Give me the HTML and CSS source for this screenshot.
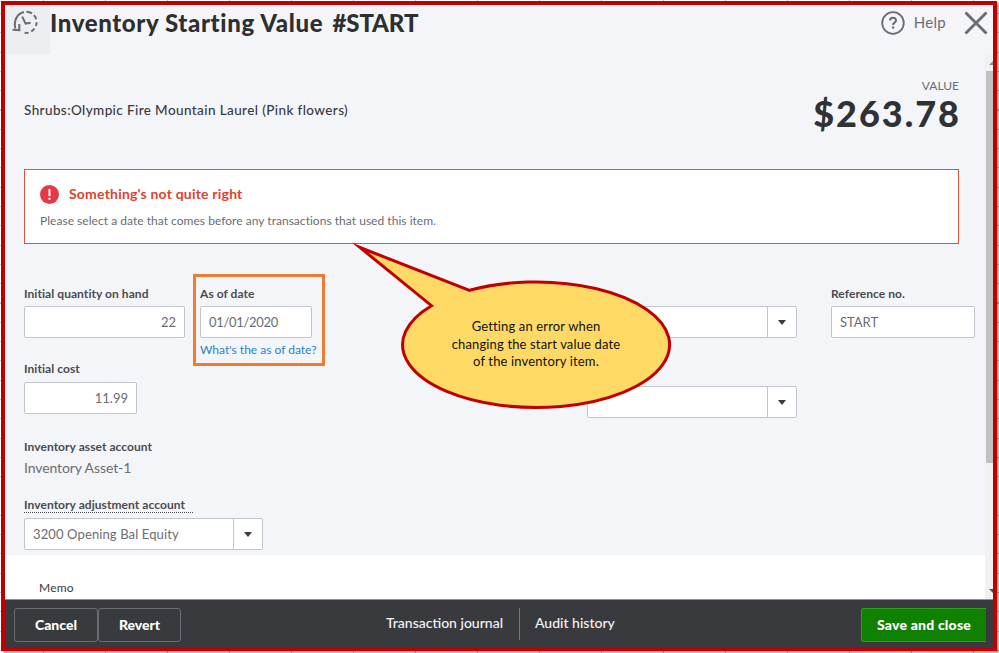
FILE: index.html
```html
<!DOCTYPE html>
<html lang="en">
<head>
    <meta charset="UTF-8">
    <meta name="viewport" content="width=device-width, initial-scale=1.0">
    <title>Inventory Starting Value</title>
    <link rel="stylesheet" href="styles.css">
</head>
<body>
    <div class="window">
        <header class="header">
            <div class="history-icon">
                <svg width="28" height="26" viewBox="0 0 28 26" fill="none" stroke="#6b6c72" stroke-width="2">
                    <path d="M3.4 18.4C1.5 11.5 4.6 3.6 12 2"/>
                    <path d="M14.4 1.7A10.7 10.7 0 0 1 20 3.4M22 5.2A10.7 10.7 0 0 1 24.2 9.2M24.6 12.2A10.7 10.7 0 0 1 23.9 16M22.4 18.6A10.7 10.7 0 0 1 19.2 21.4M16.6 22.6A10.7 10.7 0 0 1 12.6 22.8"/>
                    <path d="M0.6 19.8L7.4 20.2L7.2 14M10.2 6.6L13.6 13.6L18.6 12.8"/>
                </svg>
            </div>
            <h1 class="title">Inventory Starting Value <span class="title-number">#START</span></h1>
            <div class="help">
                <svg width="24" height="24" viewBox="0 0 24 24">
                    <circle cx="12" cy="12" r="10.8" fill="none" stroke="#6b6c72" stroke-width="1.8"/>
                    <path d="M9 9.6C9 5.8 15 5.8 15 9.4C15 11.6 12 11.6 12 14" fill="none" stroke="#6b6c72" stroke-width="2"/>
                    <rect x="11" y="15.4" width="2.2" height="2.2" fill="#6b6c72"/>
                </svg>
                <span class="help-label">Help</span>
            </div>
            <svg class="close" width="24" height="24" viewBox="0 0 24 24">
                <path d="M1.5 1.5L22.5 22.5M22.5 1.5L1.5 22.5" stroke="#6b6c72" stroke-width="2.9"/>
            </svg>
        </header>

        <div class="content">
            <main class="main">
                <div class="panel">
                    <div class="summary">
                        <div class="item-name">Shrubs:Olympic Fire Mountain Laurel (Pink flowers)</div>
                        <div class="value">
                            <div class="value-label">VALUE</div>
                            <div class="value-amount">$263.78</div>
                        </div>
                    </div>

                    <div class="error">
                        <div class="error-head">
                            <svg width="19" height="19" viewBox="0 0 19 19">
                                <circle cx="9.5" cy="9.5" r="9.5" fill="#e43947"/>
                                <path d="M9.5 4V11" stroke="#fff" stroke-width="2"/>
                                <circle cx="9.5" cy="13.8" r="1.2" fill="#fff"/>
                            </svg>
                            <span class="error-title">Something's not quite right</span>
                        </div>
                        <div class="error-text">Please select a date that comes before any transactions that used this item.</div>
                    </div>

                    <div class="form">
                        <div class="form-left">
                            <div class="field-row">
                                <div class="field">
                                    <label class="label">Initial quantity on hand</label>
                                    <div class="input input-number">22</div>
                                </div>
                                <div class="highlight">
                                    <label class="label">As of date</label>
                                    <div class="input input-date">01/01/2020</div>
                                    <a class="link">What's the as of date?</a>
                                </div>
                            </div>
                            <div class="field field-cost">
                                <label class="label">Initial cost</label>
                                <div class="input input-number">11.99</div>
                            </div>
                            <div class="field field-asset">
                                <label class="label">Inventory asset account</label>
                                <div class="static-value">Inventory Asset-1</div>
                            </div>
                            <div class="field field-adjustment">
                                <label class="label label-dotted">Inventory adjustment account</label>
                                <div class="select">
                                    <span class="select-value">3200 Opening Bal Equity</span>
                                    <span class="select-toggle"><i class="caret"></i></span>
                                </div>
                            </div>
                        </div>
                        <div class="form-middle">
                            <div class="select"><span class="select-value"></span><span class="select-toggle"><i class="caret"></i></span></div>
                            <div class="select"><span class="select-value"></span><span class="select-toggle"><i class="caret"></i></span></div>
                        </div>
                        <div class="form-right">
                            <label class="label">Reference no.</label>
                            <div class="input input-reference">START</div>
                        </div>
                    </div>
                </div>
                <div class="memo">Memo</div>
            </main>
            <div class="scrollbar">
                <i class="arrow-up"></i>
                <div class="thumb"></div>
                <i class="arrow-down"></i>
            </div>
        </div>

        <footer class="footer">
            <div class="footer-left">
                <button class="btn btn-cancel">Cancel</button>
                <button class="btn btn-revert">Revert</button>
            </div>
            <div class="footer-links">
                <a class="footer-link link-journal">Transaction journal</a>
                <a class="footer-link link-audit">Audit history</a>
            </div>
            <button class="btn btn-save">Save and close</button>
        </footer>
    </div>

    <div class="callout">
        <svg class="callout-shape" width="324" height="170" viewBox="350 241 324 170">
            <path d="M469.5 290.3A133.5 62.8 0 1 1 431.5 305.7L360 247.5Z" fill="#ffd966" stroke="#c00000" stroke-width="3" stroke-miterlimit="10"/>
        </svg>
        <p class="callout-text">Getting an error when<br>changing the start value date<br>of the inventory item.</p>
    </div>
</body>
</html>
```
FILE: styles.css
```css
* {
    box-sizing: border-box;
}

body {
    margin: 0;
    width: 999px;
    height: 653px;
    padding: 1px 2px 2px 1px;
    overflow: hidden;
    font-family: Lato, "Liberation Sans", sans-serif;
    color: #393a3d;
    /* spreadsheet grid behind the window */
    background:
        repeating-linear-gradient(to right, transparent 0 43px, #bdbdbd 43px 44px, transparent 44px 62px),
        repeating-linear-gradient(to bottom, transparent 0 13px, #c6c6c6 13px 14px, transparent 14px 19.3px),
        #fff;
}

.window {
    display: flex;
    flex-direction: column;
    width: 996px;
    height: 650px;
    border: 4px solid #c00000;
    background: #f4f5f8;
    box-shadow: 2px 2px 2px rgba(0, 0, 0, 0.4);
}

.header {
    display: flex;
    flex: none;
    height: 49px;
    color: #6b6c72;
}

.history-icon {
    width: 45px;
    height: 49px;
    padding: 5px 0 0 7px;
    background: #eceef1;
}

.title {
    margin: 0;
    font-size: 24px;
    line-height: 36px;
    font-weight: 900;
    letter-spacing: 0.62px;
    color: #2d2f30;
    white-space: nowrap;
}

.title-number {
    margin-left: 3px;
    letter-spacing: -0.1px;
}

.help {
    display: flex;
    gap: 9px;
    margin: 6px 18px 0 auto;
    height: 24px;
}

.help-label {
    font-size: 15px;
    line-height: 23px;
    letter-spacing: 0.3px;
}

.close {
    margin: 6px 5px 0 0;
}

.content {
    display: flex;
    flex: none;
    height: 545px;
}

.main {
    flex: 1;
    background: #fff;
}

.panel {
    height: 501px;
    padding: 0 10px 0 19px;
    background: #f4f5f8;
}

.summary {
    display: flex;
    justify-content: space-between;
    height: 115px;
    padding-right: 16px;
}

.item-name {
    padding-top: 47px;
    font-size: 13.5px;
    line-height: 18px;
    font-weight: 500;
    letter-spacing: 0.4px;
    white-space: nowrap;
}

.value {
    padding-top: 24px;
    text-align: right;
}

.value-label {
    font-size: 12px;
    line-height: 16px;
    color: #6b6c72;
}

.value-amount {
    margin-right: -2px;
    font-size: 36px;
    line-height: 38px;
    font-weight: 900;
    letter-spacing: 2px;
    color: #303133;
}

.error {
    width: 935px;
    height: 75px;
    padding: 15px 14px 0 15px;
    border: 1px solid #e0523f;
    background: #fff;
}

.error-head {
    display: flex;
    gap: 10px;
    height: 19px;
}

.error-title {
    font-size: 14px;
    line-height: 17px;
    font-weight: 700;
    letter-spacing: 0.2px;
    color: #e0412e;
}

.error-text {
    margin-top: 8px;
    font-size: 12px;
    line-height: 18px;
    letter-spacing: 0.03px;
    color: #6b6c72;
    white-space: nowrap;
}

.form {
    display: flex;
    height: 311px;
    padding-top: 30px;
}

.form-left {
    width: 563px;
}

.field-row {
    display: flex;
    align-items: flex-start;
    gap: 8px;
    height: 87px;
}

.field-row .field {
    width: 161px;
    padding-top: 12px;
}

.label {
    display: block;
    height: 20px;
    font-size: 12px;
    line-height: 15px;
    font-weight: 700;
    letter-spacing: 0.06px;
    color: #4a4b50;
    white-space: nowrap;
}

.input {
    height: 32px;
    padding: 0 8px;
    border: 1px solid #c1c5cc;
    border-radius: 2px;
    background: #fff;
    font-size: 13px;
    line-height: 31px;
    color: #6b6c72;
}

.input-number {
    text-align: right;
}

.highlight {
    width: 132px;
    height: 92px;
    padding: 9px 4px 0;
    border: 3px solid #ed7d31;
}

.input-date {
    width: 112px;
    letter-spacing: -0.3px;
}

.link {
    display: block;
    font-size: 12px;
    line-height: 23px;
    color: #1a86d0;
    white-space: nowrap;
}

.field-cost {
    width: 113px;
}

.field-cost .label {
    height: 21px;
}

.field-asset {
    margin-top: 25px;
}

.field-asset .label {
    height: 18px;
}

.static-value {
    font-size: 14px;
    line-height: 22px;
    letter-spacing: -0.1px;
    color: #6b6c72;
}

.field-adjustment {
    width: 239px;
    margin-top: 18px;
}

.label-dotted {
    width: 169px;
    height: 16px;
    margin-bottom: 5px;
    border-bottom: 1px dotted #4a4b50;
}

.select {
    display: flex;
    height: 32px;
    border: 1px solid #c1c5cc;
    border-radius: 2px;
    background: #fff;
}

.select-value {
    flex: 1;
    padding-left: 8px;
    font-size: 13px;
    line-height: 31px;
    letter-spacing: 0.12px;
    color: #6b6c72;
    white-space: nowrap;
}

.select-toggle {
    display: flex;
    align-items: center;
    justify-content: center;
    width: 29px;
    border-left: 1px solid #c1c5cc;
}

.caret {
    border-left: 4px solid transparent;
    border-right: 4px solid transparent;
    border-top: 5px solid #393a3d;
}

.form-middle {
    display: flex;
    flex-direction: column;
    gap: 48px;
    width: 210px;
    padding-top: 32px;
}

.form-right {
    width: 144px;
    margin-left: 34px;
    padding-top: 12px;
}

.memo {
    padding: 24px 0 0 34px;
    font-size: 12px;
    line-height: 18px;
    letter-spacing: 0.2px;
}

.scrollbar {
    display: flex;
    flex-direction: column;
    width: 9px;
    background: #f1f1f1;
    overflow: hidden;
}

.arrow-up {
    flex: none;
    margin: 7px 0 6px 4px;
    width: 8px;
    border: 4px solid transparent;
    border-top: 0;
    border-bottom-color: #8c8c8c;
}

.thumb {
    height: 392px;
    margin-left: 1px;
    background: #c1c1c1;
}

.arrow-down {
    margin: auto 0 6px 4px;
    width: 8px;
    border: 4px solid transparent;
    border-bottom: 0;
    border-top-color: #505050;
}

.footer {
    display: flex;
    flex: 1;
    border-top: 1px solid #909090;
    background: #393a3d;
}

.footer-left {
    display: flex;
    width: 371px;
    padding: 8px 0 0 9px;
}

.btn {
    height: 34px;
    padding: 0 0 2px;
    border: 1px solid #6b6c72;
    border-radius: 3px;
    background: transparent;
    font-family: inherit;
    font-size: 14px;
    font-weight: 900;
    color: #fff;
    white-space: nowrap;
}

.btn-cancel {
    width: 84px;
}

.btn-revert {
    width: 83px;
}

.footer-links {
    display: flex;
    padding-top: 8px;
}

.footer-link {
    height: 32px;
    font-size: 14px;
    line-height: 29px;
    font-weight: 500;
    color: #f4f5f8;
    white-space: nowrap;
}

.link-journal {
    width: 144px;
    padding-left: 10px;
    border-right: 1px solid #75767a;
}

.link-audit {
    padding-left: 15px;
}

.btn-save {
    width: 125px;
    margin: 8px 7px 0 auto;
    border-color: #2ca01c;
    border-right: 0;
    border-radius: 3px 0 0 3px;
    background: #108000;
    letter-spacing: 0.2px;
}

.callout {
    position: absolute;
    left: 350px;
    top: 241px;
    width: 324px;
    height: 170px;
}

.callout-shape {
    display: block;
}

.callout-text {
    position: absolute;
    left: 51px;
    top: 77px;
    width: 270px;
    margin: 0;
    font-size: 13px;
    line-height: 17.5px;
    letter-spacing: 0.15px;
    text-align: center;
    color: #111;
}
```
